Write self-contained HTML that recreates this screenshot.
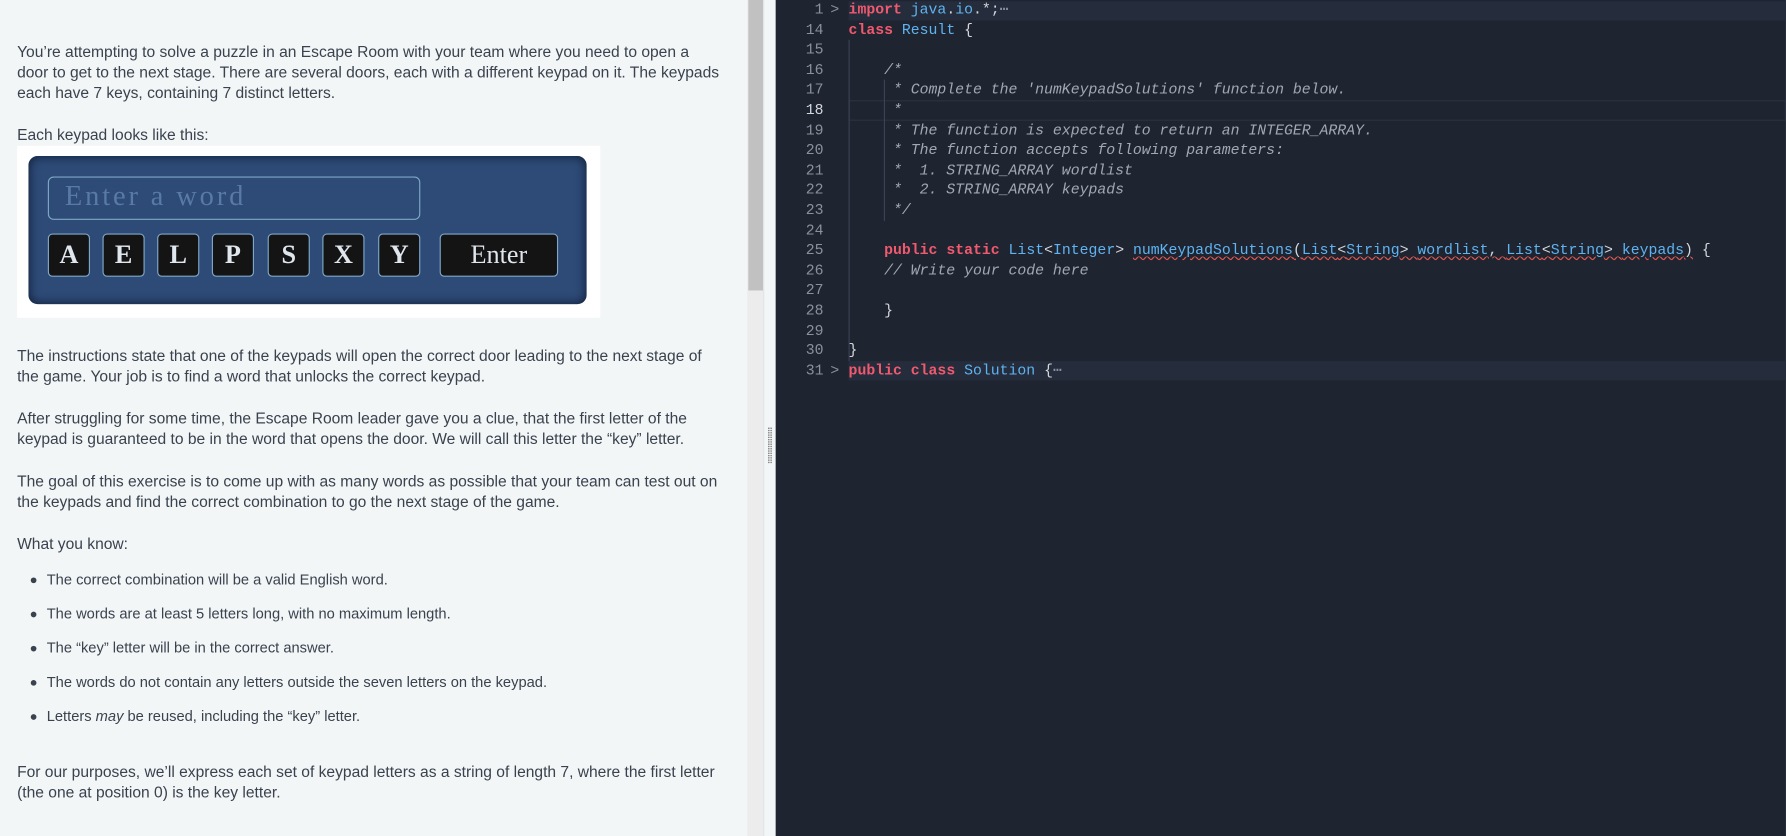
<!DOCTYPE html>
<html><head><meta charset="utf-8"><style>
*{margin:0;padding:0;box-sizing:border-box}
body{width:1786px;height:836px;overflow:hidden;background:#f3f6f7;font-family:"Liberation Sans",sans-serif;position:relative}
#w{position:absolute;left:0;top:0;width:1568px;height:734px;transform:scale(1.139);transform-origin:0 0}
.t{position:absolute;left:15px;font-size:13.7px;color:#39424e;white-space:nowrap;line-height:18px}
.b{position:absolute;left:41px;font-size:12.9px;color:#39424e;white-space:nowrap;line-height:16px}
.dot{position:absolute;left:27px;width:5px;height:5px;border-radius:50%;background:#39424e}
#sb{position:absolute;left:656px;top:0;width:14px;height:734px;background:#ececec}
#th{position:absolute;left:657px;top:0;width:13px;height:255px;background:#c1c1c1}
#dv{position:absolute;left:670px;top:0;width:11px;height:734px;background:#f3f6f7;border-left:1px solid #e0e4e6}
#ed{position:absolute;left:681px;top:0;width:887px;height:734px;background:#1f2431;font-family:"Liberation Mono",monospace;font-size:13px}
.l{position:absolute;left:0;height:18px;line-height:18px;width:887px;white-space:pre;color:#d4d7dd}
.n{position:absolute;left:0;width:42px;text-align:right;color:#8a919c}
.c{position:absolute;left:64px}
.k{color:#f0596e;font-weight:bold}
.ty{color:#5fb3f0}
.cm{color:#a2a8b3;font-style:italic}
.sq{text-decoration:underline wavy #e0584f;text-decoration-thickness:1px}
.key{position:absolute;top:205px;width:37px;height:38px;background:#141414;border:1.5px solid #7fa7c6;border-radius:4px;color:#dfe6ee;font-family:"Liberation Serif",serif;font-weight:bold;font-size:23px;text-align:center;line-height:35px}
</style></head><body><div id="w">
<div class="t" style="top:37px">You’re attempting to solve a puzzle in an Escape Room with your team where you need to open a</div>
<div class="t" style="top:55px">door to get to the next stage. There are several doors, each with a different keypad on it. The keypads</div>
<div class="t" style="top:73px">each have 7 keys, containing 7 distinct letters.</div>
<div class="t" style="top:110px">Each keypad looks like this:</div>
<div style="position:absolute;left:15px;top:128px;width:512px;height:151px;background:#fff"></div>
<div style="position:absolute;left:25px;top:137px;width:490px;height:130px;background:#2e4b78;border-radius:8px;box-shadow:inset 0 0 10px #0e1a30"></div>
<div style="position:absolute;left:42px;top:155px;width:327px;height:38px;border:1.5px solid #7fa7c6;border-radius:5px;color:#587aa3;font-family:'Liberation Serif',serif;font-size:25px;letter-spacing:2.5px;line-height:34px;padding-left:14px">Enter a word</div>
<div class="key" style="left:42px">A</div><div class="key" style="left:90px">E</div><div class="key" style="left:138px">L</div><div class="key" style="left:186px">P</div><div class="key" style="left:235px">S</div><div class="key" style="left:283px">X</div><div class="key" style="left:332px">Y</div>
<div class="key" style="left:386px;width:104px;font-weight:normal">Enter</div>
<div class="t" style="top:304px">The instructions state that one of the keypads will open the correct door leading to the next stage of</div>
<div class="t" style="top:322px">the game. Your job is to find a word that unlocks the correct keypad.</div>
<div class="t" style="top:359px">After struggling for some time, the Escape Room leader gave you a clue, that the first letter of the</div>
<div class="t" style="top:377px">keypad is guaranteed to be in the word that opens the door. We will call this letter the “key” letter.</div>
<div class="t" style="top:414px">The goal of this exercise is to come up with as many words as possible that your team can test out on</div>
<div class="t" style="top:432px">the keypads and find the correct combination to go the next stage of the game.</div>
<div class="t" style="top:469px">What you know:</div>
<div class="dot" style="top:507px"></div><div class="b" style="top:501px">The correct combination will be a valid English word.</div>
<div class="dot" style="top:537px"></div><div class="b" style="top:531px">The words are at least 5 letters long, with no maximum length.</div>
<div class="dot" style="top:567px"></div><div class="b" style="top:561px">The “key” letter will be in the correct answer.</div>
<div class="dot" style="top:597px"></div><div class="b" style="top:591px">The words do not contain any letters outside the seven letters on the keypad.</div>
<div class="dot" style="top:627px"></div><div class="b" style="top:621px">Letters <i>may</i> be reused, including the “key” letter.</div>
<div class="t" style="top:669px">For our purposes, we’ll express each set of keypad letters as a string of length 7, where the first letter</div>
<div class="t" style="top:687px">(the one at position 0) is the key letter.</div>
<div id="sb"></div><div id="th"></div><div id="dv"><div style="position:absolute;left:3px;top:375px;width:4px;height:32px;background-image:radial-gradient(#777 40%,transparent 45%);background-size:2px 2px"></div></div>
<div id="ed">
<div style="position:absolute;left:64px;top:1px;width:823px;height:17px;background:#252c3b"></div>
<div style="position:absolute;left:64px;top:317px;width:823px;height:17px;background:#252c3b"></div>
<div style="position:absolute;left:64px;top:88px;width:823px;height:18px;border:1px solid #2d3240"></div>
<div style="position:absolute;left:64px;top:35px;width:1px;height:282px;background:#3b4252"></div>
<div style="position:absolute;left:95px;top:70px;width:1px;height:124px;background:#3b4252"></div>
<div class="l" style="top:0"><span class="n">1</span><span style="position:absolute;left:48px;color:#8a919c">&gt;</span><span class="c"><span class="k">import</span> <span class="ty">java</span>.<span class="ty">io</span>.*;<span style="color:#8a919c">⋯</span></span></div>
<div class="l" style="top:17.6px"><span class="n">14</span><span class="c"><span class="k">class</span> <span class="ty">Result</span> {</span></div>
<div class="l" style="top:35.2px"><span class="n">15</span></div>
<div class="l" style="top:52.8px"><span class="n">16</span><span class="c cm">    /*</span></div>
<div class="l" style="top:70.4px"><span class="n">17</span><span class="c cm">     * Complete the 'numKeypadSolutions' function below.</span></div>
<div class="l" style="top:88px"><span class="n" style="color:#d4d7dd">18</span><span class="c cm">     *</span></div>
<div class="l" style="top:105.6px"><span class="n">19</span><span class="c cm">     * The function is expected to return an INTEGER_ARRAY.</span></div>
<div class="l" style="top:123.2px"><span class="n">20</span><span class="c cm">     * The function accepts following parameters:</span></div>
<div class="l" style="top:140.8px"><span class="n">21</span><span class="c cm">     *  1. STRING_ARRAY wordlist</span></div>
<div class="l" style="top:158.4px"><span class="n">22</span><span class="c cm">     *  2. STRING_ARRAY keypads</span></div>
<div class="l" style="top:176px"><span class="n">23</span><span class="c cm">     */</span></div>
<div class="l" style="top:193.6px"><span class="n">24</span></div>
<div class="l" style="top:211.2px"><span class="n">25</span><span class="c">    <span class="k">public</span> <span class="k">static</span> <span class="ty">List</span>&lt;<span class="ty">Integer</span>&gt; <span class="sq"><span class="ty">numKeypadSolutions</span>(<span class="ty">List</span>&lt;<span class="ty">String</span>&gt; <span class="ty">wordlist</span>, <span class="ty">List</span>&lt;<span class="ty">String</span>&gt; <span class="ty">keypads</span>)</span> {</span></div>
<div class="l" style="top:228.8px"><span class="n">26</span><span class="c cm">    // Write your code here</span></div>
<div class="l" style="top:246.4px"><span class="n">27</span></div>
<div class="l" style="top:264px"><span class="n">28</span><span class="c">    }</span></div>
<div class="l" style="top:281.6px"><span class="n">29</span></div>
<div class="l" style="top:299.2px"><span class="n">30</span><span class="c">}</span></div>
<div class="l" style="top:316.8px"><span class="n">31</span><span style="position:absolute;left:48px;color:#8a919c">&gt;</span><span class="c"><span class="k">public</span> <span class="k">class</span> <span class="ty">Solution</span> {<span style="color:#8a919c">⋯</span></span></div>
</div>
</div></body></html>
